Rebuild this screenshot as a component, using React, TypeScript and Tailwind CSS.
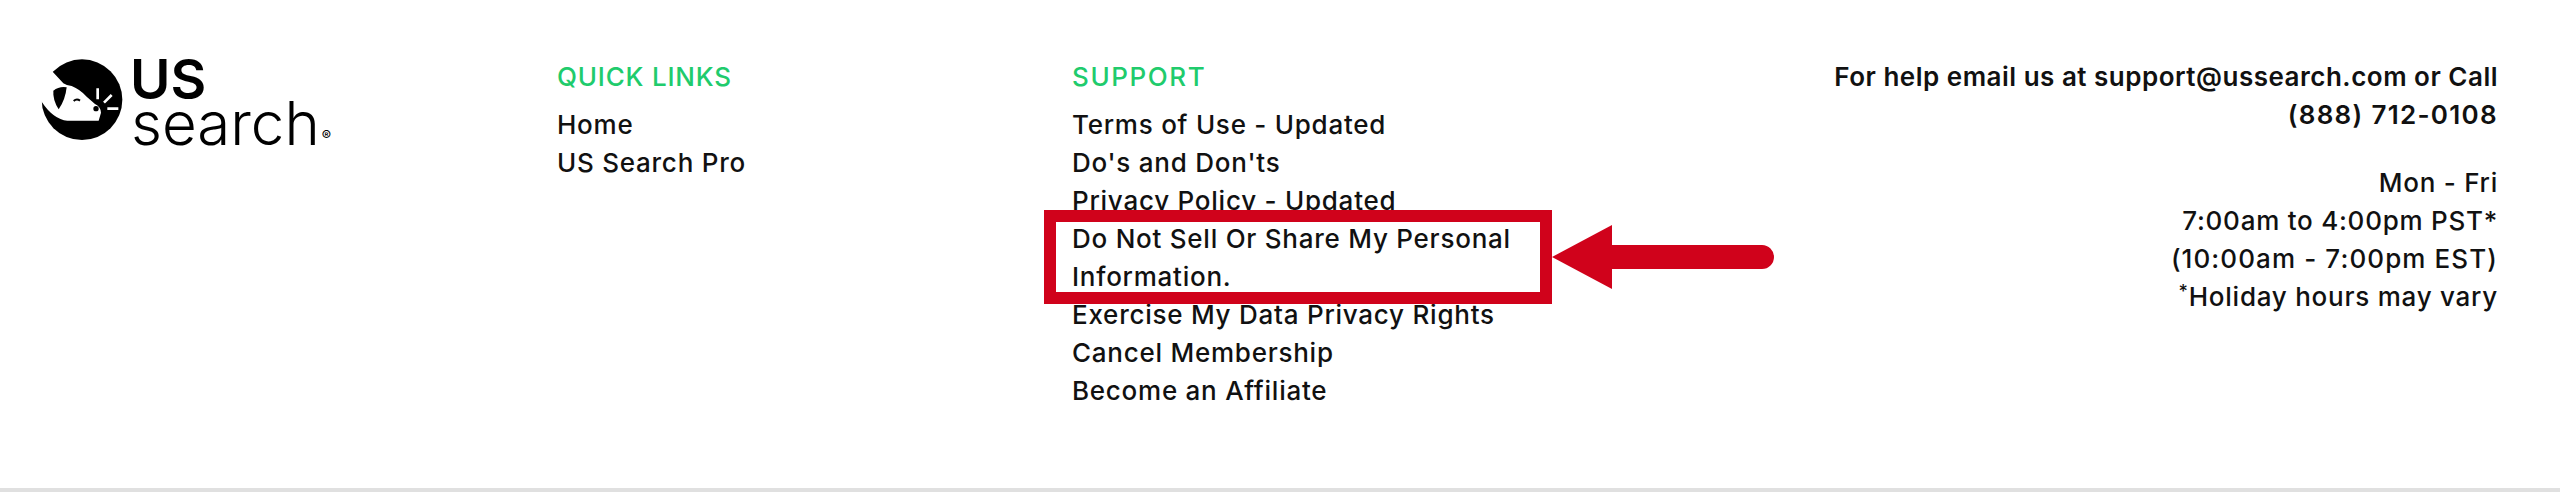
const quickLinks = ["Home", "US Search Pro"]

const supportLinks = [
  "Terms of Use - Updated",
  "Do's and Don'ts",
  "Privacy Policy - Updated",
  "Do Not Sell Or Share My Personal Information.",
  "Exercise My Data Privacy Rights",
  "Cancel Membership",
  "Become an Affiliate",
]

function LogoMark() {
  return (
    <svg width="110" height="100" viewBox="0 0 330 300" className="shrink-0">
      <circle cx="156" cy="149" r="121" fill="#000" />
      <path
        d="M0 0 L68 65 L100 100 Q112 108 125 108 Q150 118 170 140 L195 162 Q212 170 213 188 L206 212 L112 212 Q70 208 35 155 L0 150 Z"
        fill="#fff"
      />
      <path d="M70 122 Q88 108 110 112 Q106 150 86 178 Q68 150 70 122 Z" fill="#000" />
      <path d="M131 153 Q140 145 150 152" stroke="#000" strokeWidth="6" fill="none" />
      <circle cx="198" cy="176" r="8" fill="#000" />
      <path d="M203 115 V148 M245 135 L222 158 M232 176 H265" stroke="#fff" strokeWidth="8" fill="none" />
    </svg>
  )
}

export default function App() {
  return (
    <div className="relative h-[499px] w-full overflow-hidden bg-white font-['Inter','Liberation_Sans',sans-serif] text-[26px] font-medium leading-[38px] tracking-[0.75px] text-[#111]">
      <div className="flex h-[488px] w-full pt-[58px]">
        <div className="w-[557px] shrink-0 pl-[30px]">
          <div className="-mt-[8px] flex items-start">
            <LogoMark />
            <div className="-ml-[10px] mt-[9px] flex flex-col tracking-normal text-black">
              <div className="h-[41px] text-[55px] font-semibold leading-[41px]">US</div>
              <div className="ml-[1px] flex items-end">
                <span className="text-[60px] font-light leading-[46px]">search</span>
                <span className="mb-[2px] ml-[2px] text-[14px] font-medium leading-[16px]">®</span>
              </div>
            </div>
          </div>
        </div>

        <div className="w-[515px] shrink-0">
          <h3 className="font-medium tracking-[0.8px] text-[#20cb6c]">QUICK LINKS</h3>
          <ul className="mt-[10px]">
            {quickLinks.map((link) => (
              <li key={link}>{link}</li>
            ))}
          </ul>
        </div>

        <div className="w-[470px] shrink-0">
          <h3 className="font-medium tracking-[1.6px] text-[#20cb6c]">SUPPORT</h3>
          <ul className="mt-[10px]">
            {supportLinks.map((link) => (
              <li key={link}>{link}</li>
            ))}
          </ul>
        </div>

        <div className="flex-1 pr-[62px] text-right">
          <p className="font-semibold tracking-[0.5px]">
            For help email us at support@ussearch.com or Call
            <br />
            <span className="tracking-[1.3px]">(888) 712-0108</span>
          </p>
          <p className="mt-[30px]">
            Mon - Fri
            <br />
            7:00am to 4:00pm PST*
            <br />
            <span className="tracking-[1.1px]">(10:00am - 7:00pm EST)</span>
            <br />
            <sup className="relative top-[-8px] align-baseline text-[18px] leading-none">*</sup>Holiday hours may vary
          </p>
        </div>
      </div>
      <div className="h-[4px] w-full bg-[#e0e0e0]" />

      {/* red callout drawn on top of the screenshot */}
      <div className="absolute left-[1044px] top-[210px] h-[94px] w-[508px] border-[12px] border-[#d0021b]" />
      <svg className="absolute left-[1552px] top-[225px]" width="222" height="64" viewBox="0 0 222 64">
        <path d="M0 32 L60 0 V20 H210 A12 12 0 0 1 210 44 H60 V64 Z" fill="#d0021b" />
      </svg>
    </div>
  )
}
